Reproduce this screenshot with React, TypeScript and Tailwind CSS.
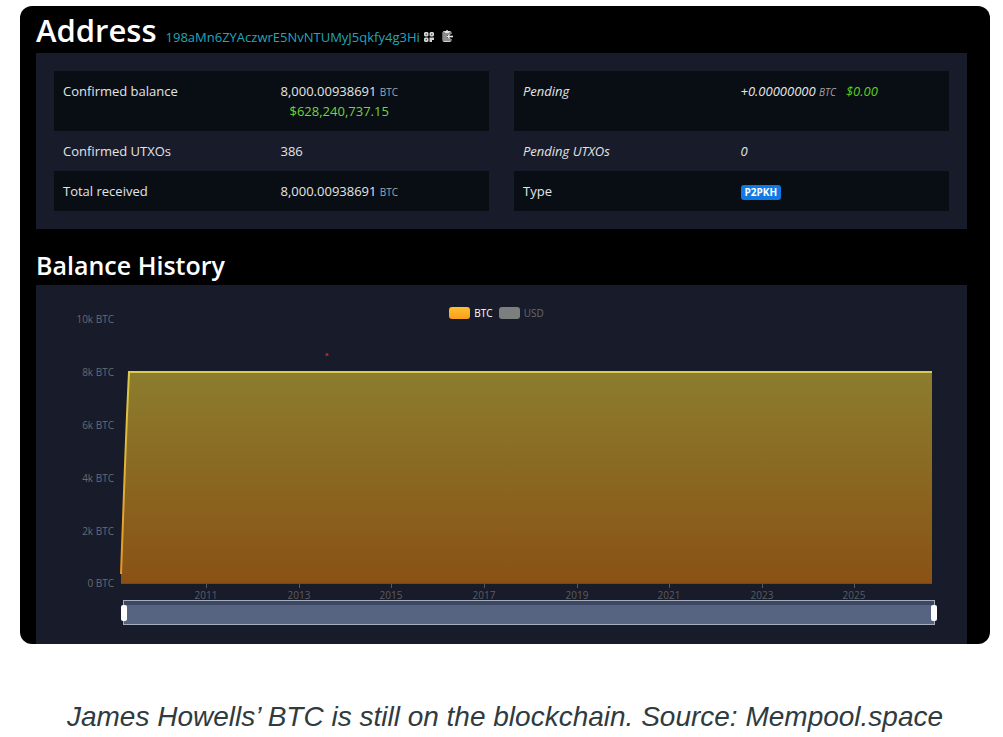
import { useState } from "react";
import type { ReactNode } from "react";

const yTicks = [
  { label: "10k BTC", y: 34 },
  { label: "8k BTC", y: 87 },
  { label: "6k BTC", y: 140 },
  { label: "4k BTC", y: 193 },
  { label: "2k BTC", y: 246 },
  { label: "0 BTC", y: 298 },
];

const xTicks = [
  { label: "2011", x: 170 },
  { label: "2013", x: 263 },
  { label: "2015", x: 355 },
  { label: "2017", x: 448 },
  { label: "2019", x: 541 },
  { label: "2021", x: 633 },
  { label: "2023", x: 726 },
  { label: "2025", x: 818 },
];

function Unit() {
  return <span className="text-[10px] leading-none text-[#a3a4a8]">BTC</span>;
}

function Row({
  label,
  children,
  className = "",
}: {
  label: string;
  children: ReactNode;
  className?: string;
}) {
  return (
    <tr className={`align-top odd:bg-[#090e15] ${className}`}>
      <th scope="row" className="w-1/2 px-[9px] py-[10px] text-left font-normal">
        {label}
      </th>
      <td className="w-1/2 px-[9px] py-[10px]">{children}</td>
    </tr>
  );
}

function QrIcon() {
  return (
    <svg viewBox="0 0 20 20" className="h-[10px] w-[10px]" aria-hidden="true">
      <path
        fill="#d2d2d2"
        fillRule="evenodd"
        d="M2 0h5l2 2v5l-2 2H2L0 7V2zM3.500 3.500v2h2v-2zM13 0h5l2 2v5l-2 2h-5l-2-2V2zM14.500 3.500v2h2v-2zM2 11h5l2 2v5l-2 2H2l-2-2v-5zM3.500 14.500v2h2v-2zM11 11h9v5h-4v4h-5z"
      />
    </svg>
  );
}

function ClipboardIcon() {
  return (
    <svg viewBox="0 0 22 24" className="h-3 w-[11px]" aria-hidden="true">
      <path fill="#8d8d8d" d="M3 4h14v18H3z" />
      <path
        fill="none"
        stroke="#d0d0d0"
        strokeWidth="2"
        d="M18 8V5a2 2 0 0 0-2-2H4a2 2 0 0 0-2 2v16a2 2 0 0 0 2 2h12a2 2 0 0 0 2-2v-3"
      />
      <path fill="#e2e2e2" d="M6 2h2a2 2 0 0 1 4 0h2v4H6z" />
      <path fill="#111" d="M10 10h12v6H10z" />
      <path fill="#e8e8e8" d="M9 13l6-5v3.500h7v3h-7V18z" />
    </svg>
  );
}

function HistoryChart() {
  return (
    <svg viewBox="0 0 931 320" className="block w-full" role="img" aria-label="Balance history">
      <defs>
        <linearGradient id="area" x1="0" y1="0" x2="0" y2="1">
          <stop offset="0" stopColor="#8c7d2e" />
          <stop offset="1" stopColor="#895214" />
        </linearGradient>
        <linearGradient id="line" gradientUnits="userSpaceOnUse" x1="0" y1="87" x2="0" y2="298">
          <stop offset="0" stopColor="#dccb4d" />
          <stop offset="1" stopColor="#eb9420" />
        </linearGradient>
      </defs>
      <path d="M85 298V289L93 87H896V298z" fill="url(#area)" />
      <path d="M85 289L87 235L89 180L91 130L93 87H896" fill="none" stroke="url(#line)" strokeWidth="2" />
      <path d="M85 298.5H896" stroke="#57513f" />
      <circle cx="291" cy="69.500" r="1.500" fill="#b5262c" />
      <g fill="#686a71" fontSize="10" textAnchor="end">
        {yTicks.map((t) => (
          <text key={t.label} x="78" y={t.y + 4}>
            {t.label}
          </text>
        ))}
      </g>
      <g fill="#5b5d64" fontSize="10" textAnchor="middle">
        {xTicks.map((t) => (
          <g key={t.label}>
            <path d={`M${t.x + 0.5} 299v4`} stroke="#565961" />
            <text x={t.x} y="314">
              {t.label}
            </text>
          </g>
        ))}
      </g>
    </svg>
  );
}

const thumb =
  "pointer-events-none absolute -inset-x-[3px] inset-y-0 appearance-none bg-transparent [&::-webkit-slider-thumb]:pointer-events-auto [&::-webkit-slider-thumb]:h-4 [&::-webkit-slider-thumb]:w-[6px] [&::-webkit-slider-thumb]:appearance-none [&::-webkit-slider-thumb]:rounded-[2px] [&::-webkit-slider-thumb]:bg-white";

function RangeZoom() {
  const [from, setFrom] = useState(0);
  const [to, setTo] = useState(100);
  return (
    <div className="relative h-[25px] border border-[#a5aec0] bg-[#566482]">
      <div className="h-1 bg-[#3c4862]" />
      <input
        type="range"
        aria-label="Range start"
        value={from}
        onChange={(e) => setFrom(Math.min(Number(e.target.value), to))}
        className={thumb}
      />
      <input
        type="range"
        aria-label="Range end"
        value={to}
        onChange={(e) => setTo(Math.max(Number(e.target.value), from))}
        className={thumb}
      />
    </div>
  );
}

export default function App() {
  return (
    <figure className="bg-white pt-[6px] pr-[13px] pl-5 font-['Open_Sans',sans-serif]">
      <div className="overflow-hidden rounded-xl bg-black pr-[23px] pl-4 text-[13px] leading-5 text-[#e4e4e6]">
        <header className="flex h-[47px] items-baseline">
          <h1 className="text-[31px] leading-[48px] font-semibold text-white">Address</h1>
          <a href="#address" className="ml-[9px] text-[#20a5bf]">
            198aMn6ZYAczwrE5NvNTUMyJ5qkfy4g3Hi
          </a>
          <button type="button" aria-label="Show QR code" className="ml-1">
            <QrIcon />
          </button>
          <button type="button" aria-label="Copy address" className="ml-2">
            <ClipboardIcon />
          </button>
        </header>

        <section className="grid grid-cols-2 items-start gap-[25px] bg-[#181b29] p-[18px]">
          <table className="w-full table-fixed">
            <tbody>
              <Row label="Confirmed balance">
                8,000.00938691 <Unit />
                <span className="block pl-[9px] text-[#74d43a]">$628,240,737.15</span>
              </Row>
              <Row label="Confirmed UTXOs">386</Row>
              <Row label="Total received">
                8,000.00938691 <Unit />
              </Row>
            </tbody>
          </table>
          <table className="w-full table-fixed">
            <tbody>
              <Row label="Pending" className="h-[60px] italic">
                +0.00000000 <Unit />
                <span className="ml-[10px] text-[#5bd01c]">$0.00</span>
              </Row>
              <Row label="Pending UTXOs" className="italic">
                0
              </Row>
              <Row label="Type">
                <span className="inline-block rounded-[3px] bg-[#0f7ae5] px-1 text-[10px] leading-[15px] font-bold text-white">
                  P2PKH
                </span>
              </Row>
            </tbody>
          </table>
        </section>

        <h2 className="pt-4 text-[25px] leading-10 font-semibold text-white">Balance History</h2>

        <section className="bg-[#181b29] pb-[19px]">
          <div className="grid">
            <div className="col-start-1 row-start-1">
              <HistoryChart />
            </div>
            <div className="col-start-1 row-start-1 flex items-center justify-center gap-[6px] self-start pt-[18px] pr-[10px] text-[10px]">
              <button type="button" className="flex items-center gap-1 text-white">
                <span className="h-3 w-[21px] rounded-[3px] bg-linear-to-b from-[#fdc02f] to-[#fb9d1c]" />
                BTC
              </button>
              <button type="button" className="flex items-center gap-1 text-[#666970]">
                <span className="h-3 w-[21px] rounded-[3px] bg-[#7b7f7e]" />
                USD
              </button>
            </div>
          </div>
          <div className="-mt-[5px] pr-[3.4%] pl-[9.3%]">
            <RangeZoom />
          </div>
        </section>
      </div>
      <figcaption className="pt-[53px] text-center font-['Liberation_Sans',sans-serif] text-[28px] leading-10 text-[#303b40] italic">
        James Howells’ BTC is still on the blockchain. Source: Mempool.space
      </figcaption>
    </figure>
  );
}
